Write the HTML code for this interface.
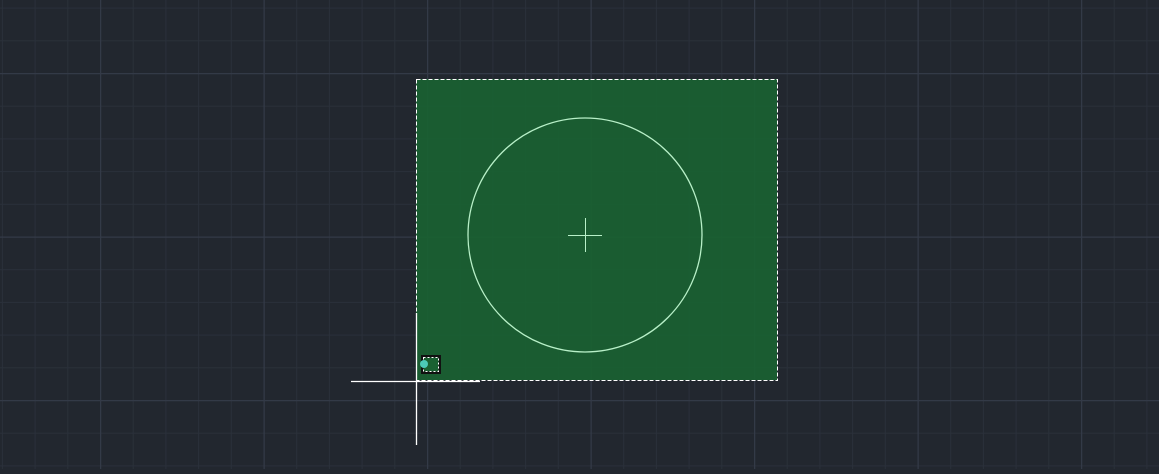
<!DOCTYPE html><html><head><style>body{margin:0;background:#22272f;width:1159px;height:469px;overflow:hidden}</style></head><body>
<svg width="1159" height="469" xmlns="http://www.w3.org/2000/svg">
<defs>
<pattern id="mi" x="100" y="73" width="32.7" height="32.7" patternUnits="userSpaceOnUse"><path d="M0.5 0V32.7M0 0.5H32.7" stroke="#2a303a" stroke-width="1" fill="none"/></pattern>
<pattern id="ma" x="100" y="73" width="163.5" height="163.5" patternUnits="userSpaceOnUse"><path d="M0.5 0V163.5M0 0.5H163.5" stroke="#333a47" stroke-width="1.5" fill="none"/></pattern>
</defs>
<rect width="1159" height="469" fill="url(#mi)"/>
<rect width="1159" height="469" fill="url(#ma)"/>
<rect x="416" y="79" width="361" height="301" fill="#1a6132" fill-opacity="0.93"/>
<rect x="416.5" y="79.5" width="361" height="301" fill="none" stroke="#fff" stroke-dasharray="4 2"/>
<circle cx="585" cy="235" r="117" fill="none" stroke="#b8f0c8" stroke-width="1.3"/>
<path d="M568 235.5H602M585.5 218V252" stroke="#b8f0c8" stroke-width="1"/>
<path d="M351 381.5H480M416.5 313V445" stroke="#fff" stroke-width="1.3"/>
<rect x="421" y="355" width="20" height="19" fill="#111"/>
<rect x="423.5" y="357.5" width="15" height="14" fill="#1a6132" stroke="#fff" stroke-dasharray="2 2"/>
<circle cx="424" cy="364" r="4" fill="#4ccab8"/>
</svg></body></html>
